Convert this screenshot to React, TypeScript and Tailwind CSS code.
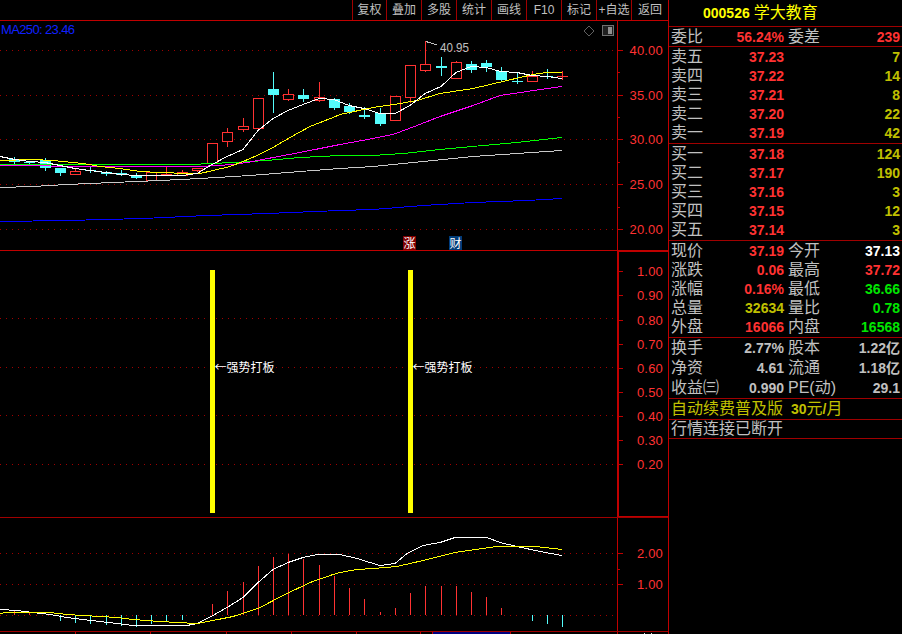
const FONT = "font-['Liberation_Sans','Noto_Sans_CJK_SC',sans-serif]";

type Candle = [number, number, number, number, number, "r" | "c"];

// x, body top, body bottom, wick top, wick bottom, colour
const candles: Candle[] = [
  [14, 159, 162, 157, 164, "c"],
  [29, 162, 163, 162, 164, "c"],
  [45, 160, 168, 158, 171, "c"],
  [60, 168, 173, 168, 176, "c"],
  [75, 171, 174, 168, 174, "r"],
  [90, 170, 170, 167, 173, "c"],
  [106, 172, 174, 171, 176, "c"],
  [121, 173, 175, 170, 176, "c"],
  [136, 176, 178, 173, 179, "c"],
  [151, 172, 180, 172, 180, "r"],
  [166, 174, 175, 167, 175, "r"],
  [182, 172, 175, 170, 175, "r"],
  [197, 168, 170, 168, 172, "r"],
  [212, 143, 163, 143, 163, "r"],
  [227, 132, 141, 128, 147, "r"],
  [243, 126, 129, 118, 132, "r"],
  [258, 98, 128, 98, 128, "r"],
  [273, 89, 95, 72, 113, "c"],
  [288, 94, 99, 89, 101, "r"],
  [303, 95, 99, 89, 102, "c"],
  [319, 97, 100, 82, 102, "r"],
  [334, 99, 108, 98, 110, "c"],
  [349, 106, 112, 103, 114, "c"],
  [364, 115, 117, 107, 119, "c"],
  [380, 113, 124, 108, 126, "c"],
  [395, 96, 120, 96, 121, "r"],
  [410, 65, 97, 65, 103, "r"],
  [425, 64, 70, 41, 72, "r"],
  [441, 66, 68, 57, 76, "c"],
  [456, 62, 78, 61, 78, "r"],
  [471, 64, 70, 61, 73, "c"],
  [486, 63, 67, 60, 72, "c"],
  [501, 71, 80, 67, 82, "c"],
  [517, 81, 81, 72, 84, "c"],
  [532, 76, 81, 71, 81, "r"],
  [547, 76, 76, 69, 79, "c"],
  [562, 76, 76, 71, 80, "r"],
];

const maLines = [
  { color: "#0000ff", pts: "0,221 67,220 143,218 207,215 267,213 340,210 373,209 423,205 473,202 527,200 562,198" },
  { color: "#c8c8c8", pts: "0,187 33,186 67,184 113,182 160,180 200,178 250,175 300,171 340,168 373,166 423,161 473,156 517,153 562,150" },
  { color: "#00ff00", pts: "0,164 190,164 233,162 267,160 300,157 340,155 373,155 403,153 440,149 483,145 517,142 562,137" },
  { color: "#ff00ff", pts: "0,165 100,166 160,166 200,166 233,164 253,161 273,157 300,152 320,148 340,144 373,138 393,134 417,125 440,116 473,105 500,95 527,91 562,86" },
  { color: "#ffff00", pts: "0,160 33,159 53,160 83,163 100,166 120,168 140,171 160,172 187,173 200,173 213,170 230,166 243,161 257,155 273,147 290,137 310,126 333,117 340,114 373,107 400,103 417,100 440,93 473,88 507,80 533,74 547,72 562,72" },
  { color: "#ffffff", pts: "0,156 15,159 30,161 45,162 60,165 75,168 90,170 106,172 121,174 136,175 151,175 166,175 182,175 197,173 212,164 227,156 243,149 258,130 273,118 288,110 303,104 319,98 334,99 349,105 364,108 380,113 395,113 410,105 425,93 441,86 456,72 471,66 486,67 501,71 517,72 532,75 547,76 562,78" },
];

// x, top, bottom
const macdBars: [number, number, number, "r" | "c"][] = [
  [14, 610, 615, "r"], [29, 612, 615, "r"], [60, 615, 621, "c"], [75, 615, 623, "c"],
  [90, 615, 624, "c"], [106, 615, 625, "c"], [121, 615, 626, "c"], [136, 615, 627, "c"],
  [151, 615, 624, "c"], [166, 615, 622, "c"], [182, 615, 620, "c"], [212, 604, 615, "r"],
  [227, 591, 615, "r"], [243, 582, 615, "r"], [258, 566, 615, "r"], [273, 557, 615, "r"],
  [288, 554, 615, "r"], [303, 559, 615, "r"], [319, 565, 615, "r"], [334, 576, 615, "r"],
  [349, 588, 615, "r"], [364, 599, 615, "r"], [380, 612, 615, "r"], [395, 608, 615, "r"],
  [410, 593, 615, "r"], [425, 586, 615, "r"], [441, 586, 615, "r"], [456, 586, 615, "r"],
  [471, 592, 615, "r"], [486, 597, 615, "r"], [501, 608, 615, "r"], [532, 615, 621, "c"],
  [547, 615, 624, "c"], [562, 615, 627, "c"],
];

const RED = "#ff3232";
const CYAN = "#54fcfc";

const toolbar = [
  ["复权", 34], ["叠加", 35], ["多股", 35], ["统计", 35], ["画线", 35],
  ["F10", 35], ["标记", 35], ["+自选", 35], ["返回", 37],
] as const;

const sellRows = [
  ["卖五", "37.23", "7"], ["卖四", "37.22", "14"], ["卖三", "37.21", "8"],
  ["卖二", "37.20", "22"], ["卖一", "37.19", "42"],
];
const buyRows = [
  ["买一", "37.18", "124"], ["买二", "37.17", "190"], ["买三", "37.16", "3"],
  ["买四", "37.15", "12"], ["买五", "37.14", "3"],
];

const gray = "text-[#c0c0c0]";
const red = "text-[#ff3232]";
const green = "text-[#00e600]";
const olive = "text-[#c0c000]";

const quoteRows = [
  ["现价", "37.19", red, "今开", "37.13", "text-white"],
  ["涨跌", "0.06", red, "最高", "37.72", red],
  ["涨幅", "0.16%", red, "最低", "36.66", green],
  ["总量", "32634", olive, "量比", "0.78", green],
  ["外盘", "16066", red, "内盘", "16568", green],
];
const financeRows = [
  ["换手", "2.77%", gray, "股本", "1.22亿", gray],
  ["净资", "4.61", gray, "流通", "1.18亿", gray],
  ["收益㈢", "0.990", gray, "PE(动)", "29.1", gray],
];

function Row({ a, b, bc, c, d, dc }: { a: string; b: string; bc: string; c?: string; d: string; dc: string }) {
  return (
    <div className="flex min-h-0 flex-1 items-center pl-[2px] pr-[2px] leading-none">
      <span className="w-[60px] shrink-0 text-[16px] whitespace-nowrap text-[#c0c0c0]">{a}</span>
      <span className={`w-[53px] shrink-0 text-right text-[14px] font-bold ${bc}`}>{b}</span>
      <span className="ml-[4px] w-[50px] shrink-0 text-[16px] whitespace-nowrap text-[#c0c0c0]">{c}</span>
      <span className={`flex-1 text-right text-[14px] font-bold whitespace-nowrap ${dc}`}>{d}</span>
    </div>
  );
}

function Line() {
  return <div className="h-px shrink-0 bg-[#a00000]" />;
}

function Grid({ ys }: { ys: number[] }) {
  return (
    <>
      {ys.map((y) => (
        <line key={y} x1="0" x2="617" y1={y + 0.5} y2={y + 0.5} stroke="#a00000" strokeDasharray="1 5" />
      ))}
    </>
  );
}

function Axis({ marks, minor }: { marks: [number, string][]; minor: number[] }) {
  return (
    <>
      {marks.map(([y, t]) => (
        <g key={t}>
          <line x1="618" x2="623" y1={y + 0.5} y2={y + 0.5} stroke="#c00000" />
          <text x="663" y={y + 5} textAnchor="end" fontSize="13" fill={RED} letterSpacing="0.2">
            {t}
          </text>
        </g>
      ))}
      {minor.map((y) => (
        <line key={y} x1="618" x2="620" y1={y + 0.5} y2={y + 0.5} stroke="#c00000" />
      ))}
    </>
  );
}

function MainChart() {
  return (
    <svg width="668" height="229" viewBox="0 21 668 229" className="block shrink-0" shapeRendering="crispEdges">
      <Grid ys={[50, 95, 139, 184, 229]} />
      <Axis
        marks={[[50, "40.00"], [95, "35.00"], [139, "30.00"], [184, "25.00"], [229, "20.00"]]}
        minor={[72, 117, 162, 207]}
      />
      <line x1="617.5" x2="617.5" y1="21" y2="250" stroke="#c00000" />
      <text x="1" y="34" fontSize="13" fill="#1020ff" textLength="74" lengthAdjust="spacing">
        MA250: 23.46
      </text>
      {/* diamond + panel toggle */}
      <path d="M589 26l5 5-5 5-5-5z" fill="none" stroke="#606060" shapeRendering="auto" />
      <rect x="602.5" y="25.5" width="11" height="10" rx="1" fill="#202020" stroke="#707070" />
      <rect x="608" y="27" width="4" height="7" fill="#909090" />
      {candles.map(([x, t, b, wt, wb, k]) => {
        const c = k === "r" ? RED : CYAN;
        return (
          <g key={x}>
            <line x1={x + 0.5} x2={x + 0.5} y1={wt} y2={wb} stroke={c} />
            {b - t < 1 ? (
              <line x1={x - 5} x2={x + 6} y1={t + 0.5} y2={t + 0.5} stroke={c} />
            ) : k === "r" ? (
              <rect x={x - 5 + 0.5} y={t + 0.5} width="10" height={b - t} fill="#000" stroke={c} />
            ) : (
              <rect x={x - 5} y={t} width="11" height={b - t} fill={c} />
            )}
          </g>
        );
      })}
      {maLines.map((l) => (
        <polyline key={l.color} points={l.pts} fill="none" stroke={l.color} transform="translate(0 0.5)" />
      ))}
      <path d="M425.5 41.5h2v1M428 42l9 3" fill="none" stroke="#c0c0c0" />
      <text x="440" y="51.5" fontSize="13" fill="#c0c0c0" textLength="29" lengthAdjust="spacingAndGlyphs">
        40.95
      </text>
      <rect x="403" y="236" width="13" height="14" fill="#800000" />
      <text x="403.5" y="248" fontSize="12" fill="#fff">涨</text>
      <rect x="449" y="236" width="13" height="14" fill="#003c78" />
      <text x="449.5" y="248" fontSize="12" fill="#fff">财</text>
    </svg>
  );
}

function SignalChart() {
  return (
    <svg width="668" height="266" viewBox="0 251 668 266" className="block shrink-0" shapeRendering="crispEdges">
      <Grid ys={[318, 367, 415, 464]} />
      <Axis
        marks={[
          [271, "1.00"], [295, "0.90"], [320, "0.80"], [344, "0.70"], [368, "0.60"],
          [392, "0.50"], [416, "0.40"], [440, "0.30"], [464, "0.20"],
        ]}
        minor={[]}
      />
      {/* active pane: the axis box is drawn heavier */}
      <rect x="617" y="251" width="51" height="1" fill="#c00000" />
      <rect x="617" y="251" width="2" height="266" fill="#c00000" />
      <rect x="617" y="516" width="51" height="1" fill="#c00000" />
      <rect x="210" y="270" width="5" height="243" fill="#ffff00" />
      <rect x="408" y="270" width="5" height="243" fill="#ffff00" />
      <text x="214.5" y="372" fontSize="12" fill="#fff" fontFamily="'Noto Sans CJK SC', sans-serif">←强势打板</text>
      <text x="412.5" y="372" fontSize="12" fill="#fff" fontFamily="'Noto Sans CJK SC', sans-serif">←强势打板</text>
    </svg>
  );
}

function MacdChart() {
  return (
    <svg width="668" height="113" viewBox="0 518 668 113" className="block shrink-0" shapeRendering="crispEdges">
      <Grid ys={[553, 584, 615]} />
      <Axis marks={[[553, "2.00"], [584, "1.00"]]} minor={[569]} />
      <line x1="617.5" x2="617.5" y1="518" y2="631" stroke="#c00000" />
      {macdBars.map(([x, t, b, k]) => (
        <line key={x} x1={x + 0.5} x2={x + 0.5} y1={t} y2={b} stroke={k === "r" ? RED : CYAN} />
      ))}
      <polyline
        fill="none"
        stroke="#fff"
        transform="translate(0 0.5)"
        points="0,609 17,610 33,612 50,614 67,617 83,619 100,621 117,623 133,625 150,625 187,625 197,623 213,615 227,607 243,597 258,582 273,569 288,562 303,557 317,554 337,554 340,554 357,558 370,562 380,565 395,563 407,553 423,545 440,542 455,537 487,537 500,542 517,546 540,551 562,555"
      />
      <polyline
        fill="none"
        stroke="#ffff00"
        transform="translate(0 0.5)"
        points="0,613 7,612 50,612 67,614 100,616 117,617 133,619 160,621 177,622 197,623 213,620 233,616 258,608 283,595 310,582 333,574 340,572 357,569 373,568 397,566 423,560 455,552 483,548 497,546 535,546 562,549"
      />
    </svg>
  );
}

function TimeStrip() {
  return (
    <svg width="668" height="2" viewBox="0 632 668 2" className="block shrink-0" shapeRendering="crispEdges">
      {[75, 150, 226, 291, 356, 420, 432, 510, 617].map((x) => (
        <rect key={x} x={x} y="632" width="1" height="2" fill="#c00000" />
      ))}
      <rect x="433" y="632" width="77" height="2" fill="#000080" />
      <rect x="644" y="633" width="1" height="1" fill="#e0e0e0" />
      <rect x="651" y="633" width="1" height="1" fill="#e0e0e0" />
    </svg>
  );
}

export default function App() {
  return (
    <div className={`flex h-[634px] w-[902px] overflow-hidden bg-black ${FONT}`}>
      <div className="flex w-[668px] shrink-0 flex-col">
        <div className="flex h-5 shrink-0 justify-end">
          {toolbar.map(([label, w]) => (
            <div
              key={label}
              style={{ width: w }}
              className="flex items-center justify-center border-l border-[#a00000] text-[12px] whitespace-nowrap text-[#c0c0c0]"
            >
              {label}
            </div>
          ))}
        </div>
        <div className="h-px shrink-0 bg-[#c00000]" />
        <MainChart />
        <div className="h-px shrink-0 bg-[#c00000]" />
        <SignalChart />
        <div className="h-px shrink-0 bg-[#a00000]" />
        <MacdChart />
        <div className="h-px shrink-0 bg-[#a00000]" />
        <TimeStrip />
      </div>
      <div className="flex w-[234px] flex-col border-l border-[#c00000]">
        <div className="flex h-[26px] shrink-0 items-center pl-[34px]">
          <span className="text-[14px] font-bold text-[#ffff00]">000526</span>
          <span className="ml-[4px] text-[16px] text-[#ffff00]">学大教育</span>
        </div>
        <Line />
        <div className="flex h-[19px] shrink-0 flex-col">
          <Row a="委比" b="56.24%" bc={red} c="委差" d="239" dc={red} />
        </div>
        <Line />
        <div className="flex h-[96px] shrink-0 flex-col">
          {sellRows.map(([a, b, d]) => (
            <Row key={a} a={a} b={b} bc={red} d={d} dc={olive} />
          ))}
        </div>
        <Line />
        <div className="flex h-[96px] shrink-0 flex-col">
          {buyRows.map(([a, b, d]) => (
            <Row key={a} a={a} b={b} bc={red} d={d} dc={olive} />
          ))}
        </div>
        <Line />
        <div className="flex h-[96px] shrink-0 flex-col">
          {quoteRows.map(([a, b, bc, c, d, dc]) => (
            <Row key={a} a={a} b={b} bc={bc} c={c} d={d} dc={dc} />
          ))}
        </div>
        <Line />
        <div className="flex h-[60px] shrink-0 flex-col">
          {financeRows.map(([a, b, bc, c, d, dc]) => (
            <Row key={a} a={a} b={b} bc={bc} c={c} d={d} dc={dc} />
          ))}
        </div>
        <Line />
        <div className="flex h-5 shrink-0 items-center pl-[2px] text-[16px] leading-none text-[#c0c000]">
          自动续费普及版
          <span className="ml-[8px] text-[14px] font-bold">30</span>
          <span>元</span>
          <span className="text-[14px] font-bold">/</span>
          <span>月</span>
        </div>
        <Line />
        <div className="flex h-[18px] shrink-0 items-center pl-[2px] text-[16px] leading-none text-[#c0c0c0]">行情连接已断开</div>
        <Line />
      </div>
    </div>
  );
}
